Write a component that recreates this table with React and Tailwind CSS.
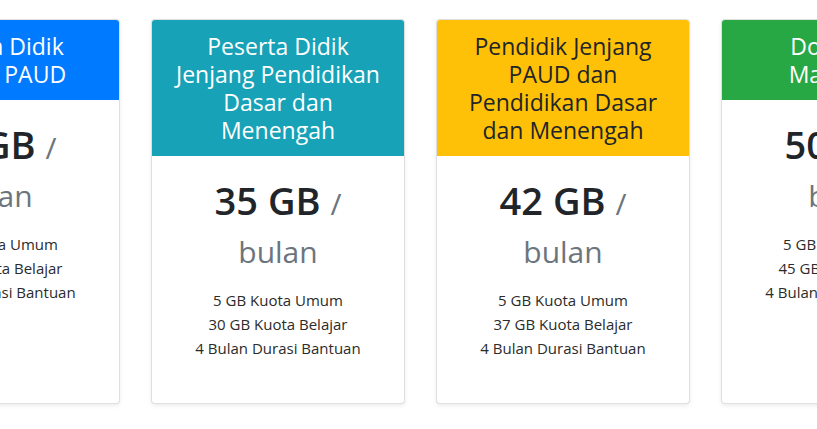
import React from 'react';

const plans = [
    {
        title: ['Peserta Didik', 'Jenjang PAUD'],
        header: 'bg-[#007bff] text-white',
        total: '20 GB',
        items: ['5 GB Kuota Umum', '15 GB Kuota Belajar', '4 Bulan Durasi Bantuan']
    },
    {
        title: ['Peserta Didik', 'Jenjang Pendidikan', 'Dasar dan', 'Menengah'],
        header: 'bg-[#17a2b8] text-white',
        total: '35 GB',
        items: ['5 GB Kuota Umum', '30 GB Kuota Belajar', '4 Bulan Durasi Bantuan']
    },
    {
        title: ['Pendidik Jenjang', 'PAUD dan', 'Pendidikan Dasar', 'dan Menengah'],
        header: 'bg-[#ffc107] text-[#212529]',
        total: '42 GB',
        items: ['5 GB Kuota Umum', '37 GB Kuota Belajar', '4 Bulan Durasi Bantuan']
    },
    {
        title: ['Dosen dan', 'Mahasiswa'],
        header: 'bg-[#28a745] text-white',
        total: '50 GB',
        items: ['5 GB Kuota Umum', '45 GB Kuota Belajar', '4 Bulan Durasi Bantuan']
    }
];

function PlanCard({ plan }) {
    return (
        <div className="w-[254px] shrink-0 flex flex-col bg-white border border-black/[.125] rounded shadow-[0_2px_4px_rgba(0,0,0,0.075)] overflow-hidden text-center">
            {/* Header */}
            <div className={`${plan.header} px-5 py-3`}>
                <h4 className="text-[23px] leading-[28px] font-normal">
                    {plan.title.map((line) => (
                        <span key={line} className="block whitespace-nowrap">{line}</span>
                    ))}
                </h4>
            </div>

            {/* Body */}
            <div className="flex-1 px-5 pt-5 pb-[43px]">
                <h1 className="text-[38px] leading-[48px] font-semibold text-[#212529]">
                    {plan.total} <small className="text-[30px] leading-none font-normal text-[#6c757d]">/ bulan</small>
                </h1>
                <ul className="mt-4 text-[15px] leading-[24px] text-[#2b2b2b]">
                    {plan.items.map((item) => (
                        <li key={item}>{item}</li>
                    ))}
                </ul>
            </div>
        </div>
    );
}

export default function App() {
    return (
        <div className="w-[817px] h-[429px] overflow-hidden bg-white pt-[19px] font-['Open_Sans',sans-serif]">
            <div className="flex gap-[31px] ml-[-134px]">
                {plans.map((plan) => (
                    <PlanCard key={plan.total} plan={plan} />
                ))}
            </div>
        </div>
    );
}
